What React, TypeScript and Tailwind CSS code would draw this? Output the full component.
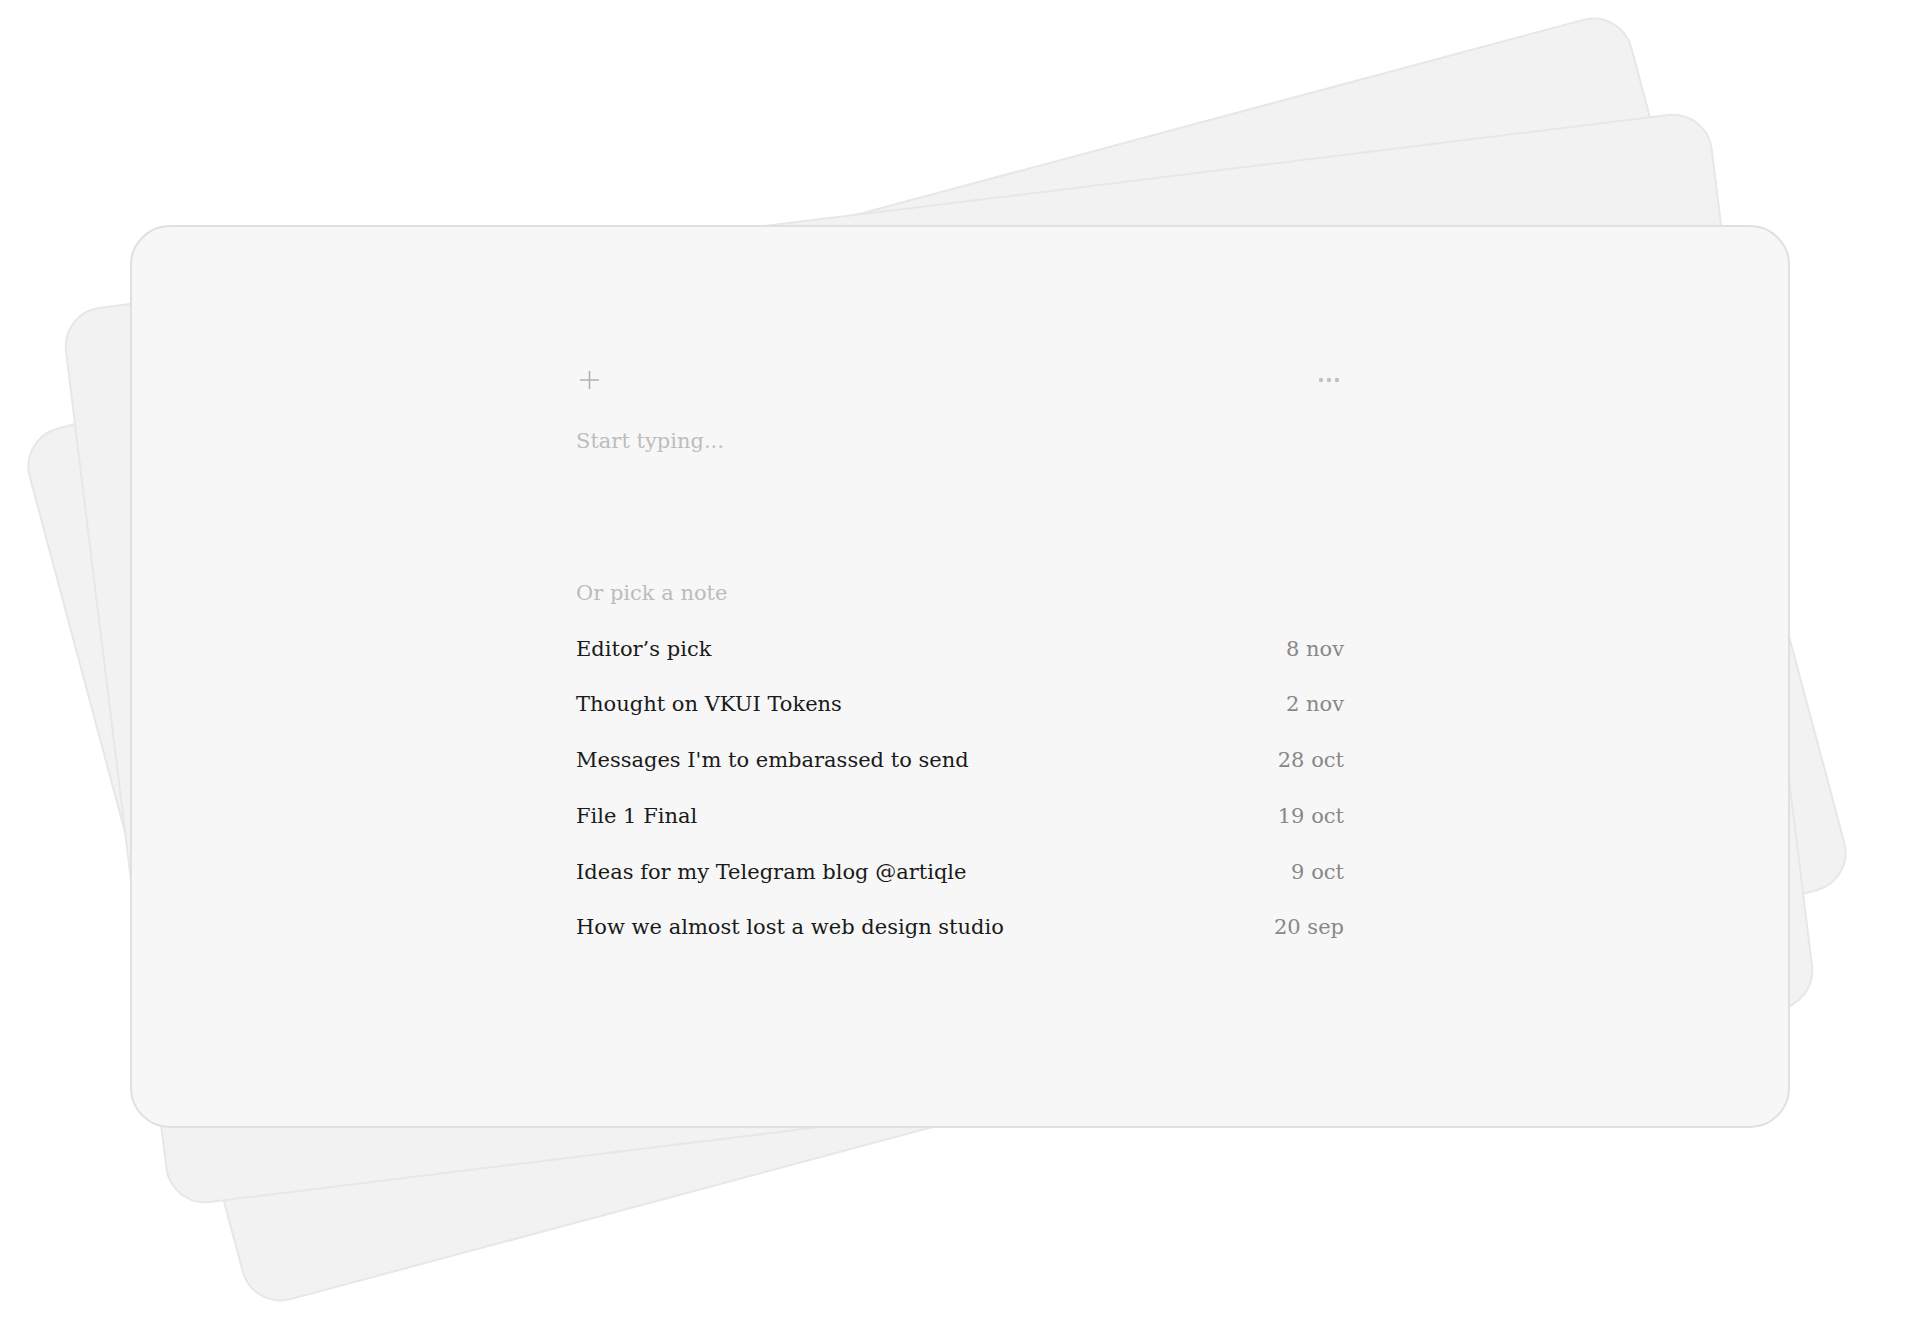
const notes = [
  { title: 'Editor’s pick', date: '8 nov' },
  { title: 'Thought on VKUI Tokens', date: '2 nov' },
  { title: "Messages I'm to embarassed to send", date: '28 oct' },
  { title: 'File 1 Final', date: '19 oct' },
  { title: 'Ideas for my Telegram blog @artiqle', date: '9 oct' },
  { title: 'How we almost lost a web design studio', date: '20 sep' },
];

function PlusIcon() {
  return (
    <svg width="24" height="20" viewBox="0 0 24 20" fill="none" stroke="#b3b3b3" strokeWidth="1.6">
      <line x1="13.5" y1="1" x2="13.5" y2="19" />
      <line x1="4" y1="10" x2="23" y2="10" />
    </svg>
  );
}

function DotsIcon() {
  return (
    <svg width="28" height="20" viewBox="0 0 28 20" fill="#c2c2c2">
      <circle cx="5" cy="10" r="2.2" />
      <circle cx="13" cy="10" r="2.2" />
      <circle cx="21" cy="10" r="2.2" />
    </svg>
  );
}

function App() {
  return (
    <div className="relative w-full h-[1320px] bg-white overflow-hidden font-['DejaVu_Serif',serif]">
      {/* stacked cards behind */}
      <div className="absolute left-[107px] top-[208px] w-[1660px] h-[903px] rounded-[40px] bg-[#f2f2f2] border-2 border-[#e7e7e7] rotate-[-15deg]"></div>
      <div className="absolute left-[109px] top-[207px] w-[1660px] h-[903px] rounded-[40px] bg-[#f2f2f2] border-2 border-[#e7e7e7] rotate-[-7deg]"></div>

      <div className="relative pt-[225px] pl-[130px]">
        <div className="w-[1660px] h-[903px] rounded-[40px] bg-[#f7f7f7] border-2 border-[#e0e0e0]">
          <div className="w-[768px] mx-auto pt-[143px]">
            {/* Toolbar */}
            <div className="flex items-center justify-between h-5">
              <button type="button" className="flex items-center">
                <PlusIcon />
              </button>
              <button type="button" className="flex items-center">
                <DotsIcon />
              </button>
            </div>

            <div className="mt-[23px] text-[21px] leading-[56px] text-[#bdbdbd]">Start typing...</div>

            {/* Notes */}
            <div className="mt-[97px] text-[21px] leading-[55.7px]">
              <div className="text-[#bcbcbc]">Or pick a note</div>
              {notes.map((n) => (
                <div key={n.title} className="flex justify-between">
                  <span className="text-[#1a1a1a]">{n.title}</span>
                  <span className="text-[#888888]">{n.date}</span>
                </div>
              ))}
            </div>
          </div>
        </div>
      </div>
    </div>
  );
}

export default App;
